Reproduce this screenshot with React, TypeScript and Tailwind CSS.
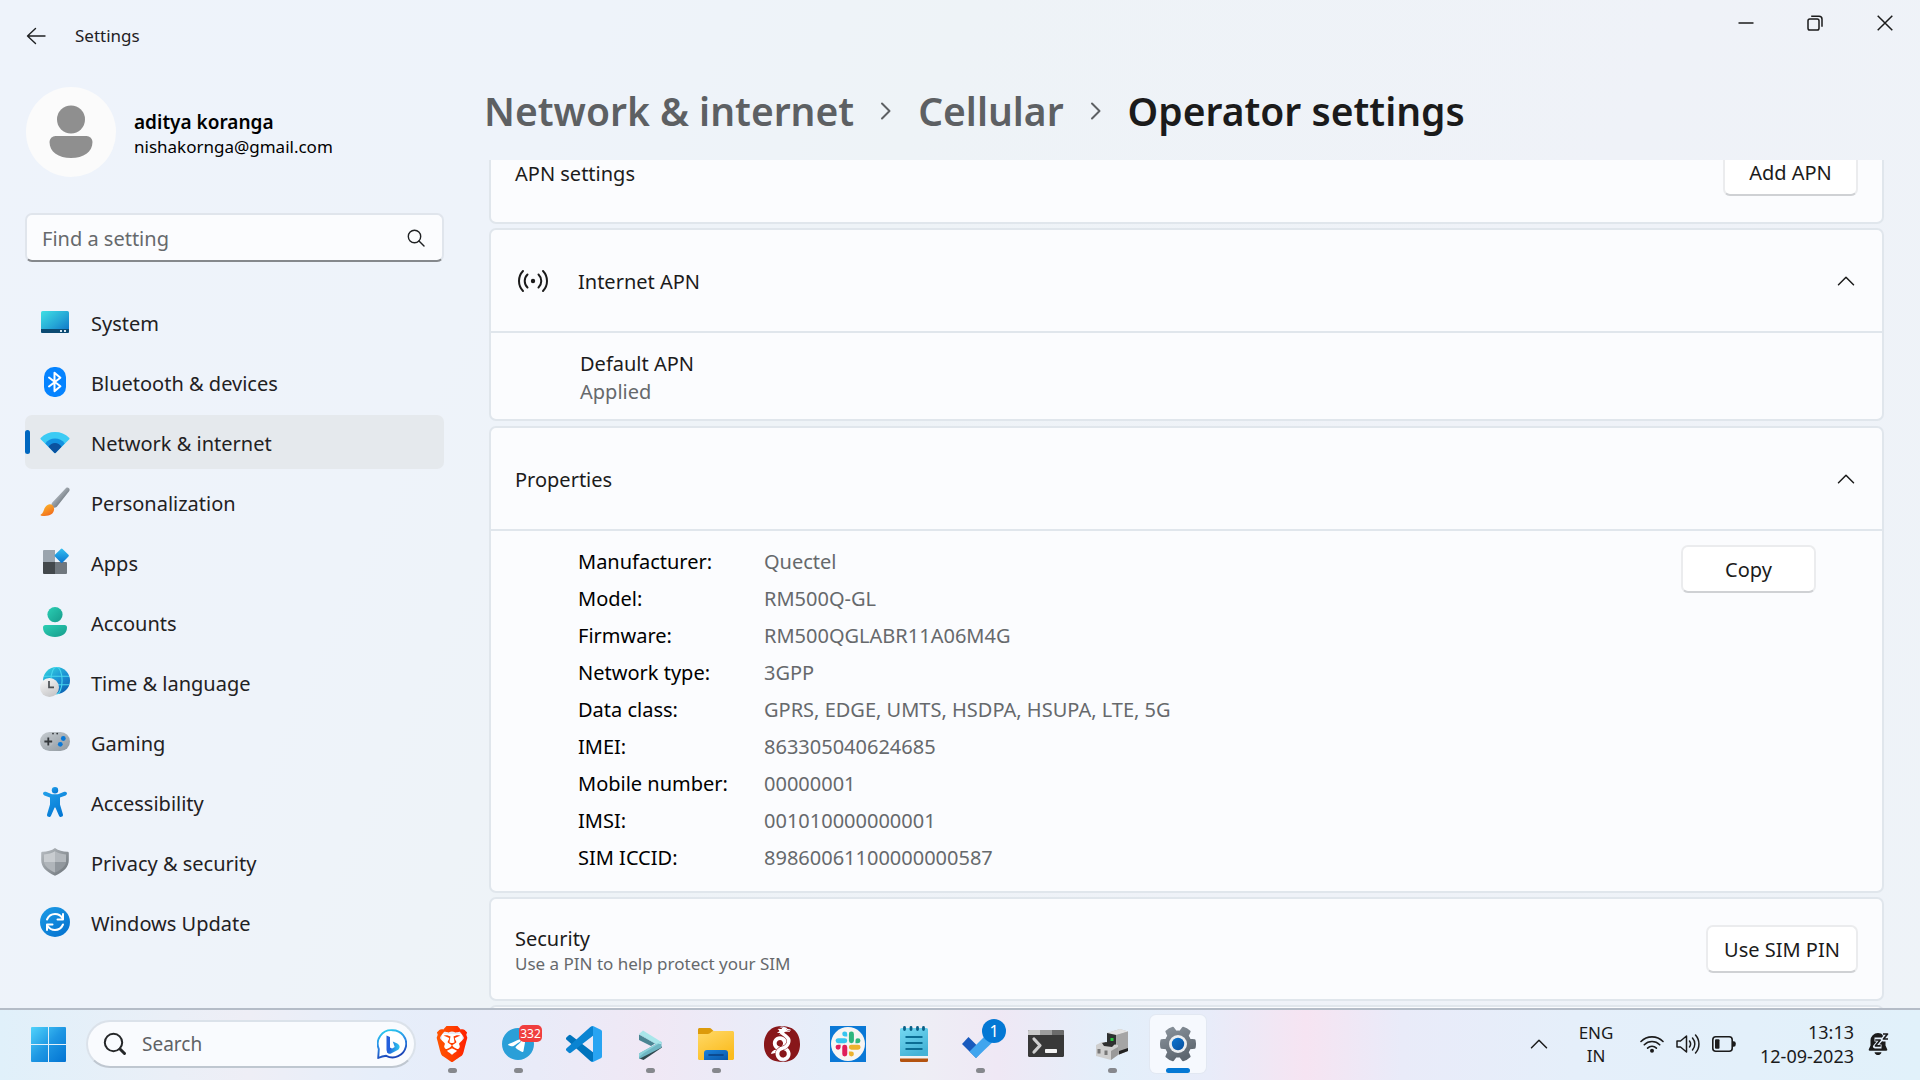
import React from "react";
import { SiBrave, SiTelegram, SiWireguard } from "react-icons/si";

type IconProps = { className?: string };

/* ---------- Sidebar icons (30 x 30) ---------- */

const SystemIcon = () => (
  <svg viewBox="0 0 30 30" className="size-[30px]">
    <defs>
      <linearGradient id="sys" x1="0" y1="0" x2="1" y2="1">
        <stop offset="0" stopColor="#3fe0e4" />
        <stop offset="0.55" stopColor="#25a6d6" />
        <stop offset="1" stopColor="#0c6fc6" />
      </linearGradient>
    </defs>
    <rect x="1" y="4" width="28" height="22" rx="1.6" fill="url(#sys)" />
    <path d="M1 22h28v2.4a1.6 1.6 0 0 1-1.6 1.6H2.600A1.600 1.600 0 0 1 1 24.400Z" fill="#0b4a72" />
    <rect x="20" y="23" width="2" height="2" fill="#d5e6f2" />
    <rect x="24" y="23" width="2" height="2" fill="#d5e6f2" />
  </svg>
);

const BluetoothIcon = () => (
  <svg viewBox="0 0 30 30" className="size-[30px]">
    <rect x="4" y="0" width="22" height="30" rx="10" fill="#0583ff" />
    <path d="M9 10.500 20.400 19.300 14.500 24.200V5.800L20.400 10.700 9 19.500" fill="none" stroke="#fff" strokeWidth="2" strokeLinejoin="round" strokeLinecap="round" />
  </svg>
);

const NetworkIcon = () => (
  <svg viewBox="0 0 30 30" className="size-[30px]">
    <path d="M0.700 12.300C0.300 11.800 0.400 11.200 0.900 10.800 4.500 7 9.500 5 15 5s10.500 2 14.100 5.800c.5.4.6 1 .2 1.500L15.700 25.800a1 1 0 0 1-1.400 0Z" fill="#3ccbf4" />
    <path d="M5.300 16.500C7.700 13 11 11.400 15 11.400s7.300 1.600 9.700 5.100L15.700 25.800a1 1 0 0 1-1.400 0Z" fill="#1391e0" />
    <path d="M8.500 19.800c1.500-2.500 3.800-3.900 6.500-3.900s5 1.400 6.500 3.900l-5.800 6a1 1 0 0 1-1.400 0Z" fill="#0b529f" />
  </svg>
);

const BrushIcon = () => (
  <svg viewBox="0 0 30 30" className="size-[30px]">
    <defs>
      <linearGradient id="brh" x1="0" y1="0" x2="1" y2="1">
        <stop offset="0.300" stopColor="#b3bac1" />
        <stop offset="0.700" stopColor="#6e767e" />
      </linearGradient>
      <linearGradient id="brt" x1="0.200" y1="0" x2="0.800" y2="1">
        <stop offset="0" stopColor="#fdb92c" />
        <stop offset="1" stopColor="#f0651b" />
      </linearGradient>
    </defs>
    <path d="M26 1c2-1.500 4.500.6 3.300 3L17 19.500c-1 1.600-3.500 1.400-4.700.2-1.200-1.100-1-3 0-4.200Z" fill="url(#brh)" />
    <path d="M7.500 18c3-2 7 .5 6.600 4.500C13.500 27.500 9 29.600 1.300 28.700.4 28.500.4 27.700 1.200 27.300 4 26 3.300 20.500 7.500 18Z" fill="url(#brt)" />
  </svg>
);

const AppsIcon = () => (
  <svg viewBox="0 0 30 30" className="size-[30px]">
    <defs>
      <linearGradient id="apd" x1="0" y1="0" x2="1" y2="1">
        <stop offset="0" stopColor="#35c1f1" />
        <stop offset="1" stopColor="#0a74cf" />
      </linearGradient>
    </defs>
    <path d="M4 3h11v12H3V4a1 1 0 0 1 1-1Z" fill="#9aa4ae" />
    <path d="M3 15h12v12H4a1 1 0 0 1-1-1Z" fill="#43484c" />
    <path d="M15 15h11a1 1 0 0 1 1 1v10a1 1 0 0 1-1 1H15Z" fill="#70777e" />
    <rect x="16.300" y="3.300" width="10.800" height="10.800" rx="1.200" transform="rotate(45 21.700 8.700)" fill="url(#apd)" />
  </svg>
);

const AccountsIcon = () => (
  <svg viewBox="0 0 30 30" className="size-[30px]">
    <defs>
      <linearGradient id="acc" x1="0" y1="0" x2="1" y2="1">
        <stop offset="0" stopColor="#2bcfb4" />
        <stop offset="1" stopColor="#169b8b" />
      </linearGradient>
    </defs>
    <circle cx="15" cy="7.600" r="7.600" fill="url(#acc)" />
    <path d="M5.500 18h19A2.500 2.500 0 0 1 27 20.500C27 26.500 22 30 15 30S3 26.500 3 20.500A2.500 2.500 0 0 1 5.500 18Z" fill="url(#acc)" />
  </svg>
);

const TimeIcon = () => (
  <svg viewBox="0 0 30 30" className="size-[30px]">
    <defs>
      <linearGradient id="glb" x1="0.200" y1="0" x2="0.900" y2="1">
        <stop offset="0" stopColor="#32d0de" />
        <stop offset="0.500" stopColor="#1b8fd3" />
        <stop offset="1" stopColor="#0a5cae" />
      </linearGradient>
      <linearGradient id="clk" x1="0" y1="0" x2="0.500" y2="1">
        <stop offset="0" stopColor="#fbfbfb" />
        <stop offset="1" stopColor="#c9c9cb" />
      </linearGradient>
    </defs>
    <circle cx="16.500" cy="13.500" r="13.500" fill="url(#glb)" />
    <g fill="none" stroke="#49d6ee" strokeWidth="1.100">
      <ellipse cx="16.500" cy="13.500" rx="5.600" ry="13.500" />
      <path d="M4 9.200h25M4 17.800h25" />
    </g>
    <circle cx="9.500" cy="20.500" r="9.500" fill="url(#clk)" />
    <path d="M9 14v6.400h5" fill="none" stroke="#4b4f53" strokeWidth="1.700" />
  </svg>
);

const GamingIcon = () => (
  <svg viewBox="0 0 30 30" className="size-[30px]">
    <defs>
      <linearGradient id="gam" x1="0" y1="0" x2="1" y2="1">
        <stop offset="0" stopColor="#c6ccd1" />
        <stop offset="1" stopColor="#90989f" />
      </linearGradient>
    </defs>
    <rect x="0" y="5" width="30" height="19" rx="9.500" fill="url(#gam)" />
    <circle cx="8.300" cy="14.500" r="5" fill="#b4bac0" />
    <path d="M8.300 10.600v7.800M4.400 14.500h7.800" stroke="#34383c" strokeWidth="1.800" />
    <circle cx="23.300" cy="11.500" r="2.400" fill="#0a78d6" />
    <circle cx="20.300" cy="17.300" r="2.400" fill="#0a78d6" />
    <circle cx="13" cy="6.600" r="0.900" fill="#34383c" />
    <circle cx="17.200" cy="6.600" r="0.900" fill="#34383c" />
  </svg>
);

const AccessibilityIcon = () => (
  <svg viewBox="0 0 30 30" className="size-[30px]">
    <defs>
      <linearGradient id="a11" x1="0" y1="0" x2="0.600" y2="1">
        <stop offset="0" stopColor="#22a0ea" />
        <stop offset="1" stopColor="#0478d4" />
      </linearGradient>
    </defs>
    <circle cx="15" cy="3.200" r="3.200" fill="url(#a11)" />
    <path d="M3.200 5.800c.5-1.100 1.500-1.400 2.600-1L12 7.300h6l6.200-2.500c1.100-.4 2.100-.1 2.600 1s-.1 2.100-1.200 2.600L20 10.600v7l2.900 9.700c.3 1.200-.3 2.100-1.300 2.500-1.100.4-2.100 0-2.600-1.100L15.500 20.800c-.2-.4-.8-.4-1 0L11 28.700c-.5 1.100-1.500 1.500-2.600 1.100-1-.4-1.600-1.300-1.300-2.500L10 17.600v-7L4.400 8.400C3.300 7.900 2.700 6.900 3.200 5.800Z" fill="url(#a11)" />
  </svg>
);

const ShieldIcon = () => (
  <svg viewBox="0 0 30 30" className="size-[30px]">
    <defs>
      <linearGradient id="shd" x1="0" y1="0" x2="1" y2="1">
        <stop offset="0" stopColor="#b9bec3" />
        <stop offset="1" stopColor="#6b7278" />
      </linearGradient>
    </defs>
    <path d="M15 1c3.500 2.500 8 3.700 12.300 3.700.9 0 1.500.5 1.500 1.300v7c0 6.600-4.800 12-13.800 15.700C6 25 1.200 19.600 1.200 13V6c0-.8.6-1.300 1.500-1.300C7 4.700 11.500 3.500 15 1Z" fill="url(#shd)" />
    <path d="M15 4.300V15H4V7.400C8 7.200 12 6.200 15 4.300Z" fill="#c8ccd0" />
    <path d="M15 4.300V15h11V7.400C22 7.200 18 6.200 15 4.300Z" fill="#b3b8bd" />
    <path d="M15 15v10.600C8.500 22.600 4.500 19 4 15Z" fill="#b0b5ba" />
    <path d="M15 15v10.600C21.500 22.600 25.500 19 26 15Z" fill="#91979d" />
  </svg>
);

const UpdateIcon = () => (
  <svg viewBox="0 0 30 30" className="size-[30px]">
    <defs>
      <linearGradient id="upd" x1="0" y1="0" x2="0.800" y2="1">
        <stop offset="0" stopColor="#1d9ce6" />
        <stop offset="1" stopColor="#0573d0" />
      </linearGradient>
    </defs>
    <circle cx="15" cy="15" r="15" fill="url(#upd)" />
    <g fill="none" stroke="#fff" strokeWidth="2" strokeLinejoin="round" strokeLinecap="round">
      <path d="M7 12.500C8.500 9 11.500 7 15 7c3 0 5.800 1.500 7.300 4" />
      <path d="M23 7v5.500h-5.500" />
      <path d="M23 17.500C21.500 21 18.500 23 15 23c-3 0-5.800-1.500-7.300-4" />
      <path d="M7 23v-5.500h5.500" />
    </g>
  </svg>
);

const navItems: { label: string; icon: () => React.ReactElement; active?: boolean }[] = [
  { label: "System", icon: SystemIcon },
  { label: "Bluetooth & devices", icon: BluetoothIcon },
  { label: "Network & internet", icon: NetworkIcon, active: true },
  { label: "Personalization", icon: BrushIcon },
  { label: "Apps", icon: AppsIcon },
  { label: "Accounts", icon: AccountsIcon },
  { label: "Time & language", icon: TimeIcon },
  { label: "Gaming", icon: GamingIcon },
  { label: "Accessibility", icon: AccessibilityIcon },
  { label: "Privacy & security", icon: ShieldIcon },
  { label: "Windows Update", icon: UpdateIcon },
];

/* ---------- Shared pieces ---------- */

const ChevronUp = ({ className = "" }: IconProps) => (
  <svg viewBox="0 0 18 10" className={className} fill="none" stroke="#1b1b1b" strokeWidth="1.500" strokeLinecap="round" strokeLinejoin="round">
    <path d="M1.500 8.700 9 1.200l7.500 7.500" />
  </svg>
);

const ChevronSep = () => (
  <svg viewBox="0 0 12 18" className="h-[18px] w-3 shrink-0" fill="none" stroke="#5d6063" strokeWidth="2" strokeLinecap="round" strokeLinejoin="round">
    <path d="M2 1.500 9.500 9 2 16.500" />
  </svg>
);

function Card({ children, className = "" }: { children: React.ReactNode; className?: string }) {
  return <section className={`shrink-0 rounded-[7px] border-2 border-[#e0e6ec] bg-[#fbfcfe] ${className}`}>{children}</section>;
}

function PushButton({ children, className = "" }: { children: React.ReactNode; className?: string }) {
  return (
    <button className={`h-12 rounded-[7px] border-2 border-[#ebecee] border-b-[#cfd1d4] bg-white pt-0.5 text-[20px] leading-6 text-[#1b1b1b] ${className}`}>
      {children}
    </button>
  );
}

function Sidebar() {
  return (
    <aside className="flex w-[444px] shrink-0 flex-col pl-[25px]">
      <button className="mt-[15px] flex items-center gap-[18px] pl-px text-left">
        <svg viewBox="0 0 90 90" className="size-[90px]">
          <circle cx="45" cy="45" r="45" fill="#fbfbfb" />
          <circle cx="45" cy="32.500" r="14" fill="#8f8f8f" />
          <path d="M29.500 49h31a6 6 0 0 1 6 6c0 10-9 16-21.500 16s-21.500-6-21.500-16a6 6 0 0 1 6-6Z" fill="#8f8f8f" />
        </svg>
        <span className="flex flex-col pt-1 text-black">
          <span className="text-[19px] leading-[26px] font-semibold">aditya koranga</span>
          <span className="text-[17px] leading-6">nishakornga@gmail.com</span>
        </span>
      </button>

      <label className="mt-9 flex h-[49px] items-center rounded-[7px] border-2 border-[#e0e5ec] border-b-[#85888c] bg-[#fbfcfe] pr-[17px] pl-[15px]">
        <input type="text" aria-label="Find a setting" placeholder="Find a setting" className="min-w-0 flex-1 bg-transparent pt-0.5 text-[20px] leading-7 outline-none placeholder:text-[#66696c]" />
        <svg viewBox="0 0 18 18" className="size-[18px]" fill="none" stroke="#1f2123" strokeWidth="1.400" strokeLinecap="round">
          <circle cx="7.500" cy="7.500" r="6.200" />
          <path d="m12 12 5 5" />
        </svg>
      </label>

      <nav className="mt-[33px] flex flex-col gap-1.5">
        {navItems.map(({ label, icon: Icon, active }) => (
          <a
            key={label}
            href="#"
            className={`relative flex h-[54px] items-center gap-[21px] rounded-[7px] pl-[15px] text-[20px] leading-7 text-[#1f2123] ${active ? "bg-[#e5e9ed]" : ""}`}
          >
            {active && <span className="absolute top-[15px] left-0 h-6 w-[5px] rounded-full bg-[#0067c0]" />}
            <Icon />
            <span className="pt-[3px]">{label}</span>
          </a>
        ))}
      </nav>
    </aside>
  );
}

const properties: [string, string][] = [
  ["Manufacturer:", "Quectel"],
  ["Model:", "RM500Q-GL"],
  ["Firmware:", "RM500QGLABR11A06M4G"],
  ["Network type:", "3GPP"],
  ["Data class:", "GPRS, EDGE, UMTS, HSDPA, HSUPA, LTE, 5G"],
  ["IMEI:", "863305040624685"],
  ["Mobile number:", "00000001"],
  ["IMSI:", "001010000000001"],
  ["SIM ICCID:", "89860061100000000587"],
];

function Content() {
  return (
    <main className="flex min-w-0 flex-1 flex-col pr-9 pl-10">
      <h1 className="flex h-[88px] shrink-0 items-center gap-[26px] pb-2.5 text-[39px] leading-[52px] font-semibold text-[#5d6063]">
        <a href="#">Network &amp; internet</a>
        <ChevronSep />
        <a href="#">Cellular</a>
        <ChevronSep />
        <span className="text-[#1b1b1b]">Operator settings</span>
      </h1>

      <div className="min-h-0 flex-1 overflow-hidden pl-[5px]">
        <div className="-mt-10 flex flex-col gap-1 text-[20px] leading-7 text-[#1b1b1b]">
          <Card className="flex h-[104px] items-center justify-between pr-6 pl-6">
            <h2 className="pt-[3px] leading-6">APN settings</h2>
            <PushButton className="w-[135px]">Add APN</PushButton>
          </Card>

          <Card>
            <button className="flex h-[103px] w-full items-center border-b-2 border-[#e0e6ec] pr-[27px] pl-[25px]">
              <svg viewBox="0 0 34 26" className="h-[26px] w-[34px]" fill="none" stroke="#1b1b1b" strokeWidth="2" strokeLinecap="round">
                <path d="M7 3a14.500 14.500 0 0 0 0 20M27 3a14.500 14.500 0 0 1 0 20M11.500 6.500a9 9 0 0 0 0 13M22.500 6.500a9 9 0 0 1 0 13" />
                <circle cx="17" cy="13" r="2.200" fill="#1b1b1b" stroke="none" />
              </svg>
              <span className="ml-[28px] flex-1 pt-0.5 text-left">Internet APN</span>
              <ChevronUp className="h-2.5 w-[18px]" />
            </button>
            <div className="pt-[17px] pb-[13px] pl-[89px]">
              <p>Default APN</p>
              <p className="text-[#66696c]">Applied</p>
            </div>
          </Card>

          <Card className="mt-px">
            <button className="flex h-[103px] w-full items-center justify-between border-b-2 border-[#e0e6ec] pr-[27px] pl-6">
              <span className="pt-0.5">Properties</span>
              <ChevronUp className="h-2.5 w-[18px]" />
            </button>
            <div className="flex items-start justify-between pt-3 pr-[66px] pb-[15px] pl-[87px]">
              <table className="text-left">
                <tbody>
                  {properties.map(([name, value]) => (
                    <tr key={name} className="h-[37px]">
                      <th scope="row" className="w-[186px] font-normal text-black">{name}</th>
                      <td className="text-[#66696c]">{value}</td>
                    </tr>
                  ))}
                </tbody>
              </table>
              <PushButton className="mt-0.5 w-[135px]">Copy</PushButton>
            </div>
          </Card>

          <Card className="flex h-[104px] items-center justify-between pr-6 pl-6">
            <div className="pt-[3px]">
              <h2 className="leading-[26px]">Security</h2>
              <p className="text-[17px] leading-6 text-[#66696c]">Use a PIN to help protect your SIM</p>
            </div>
            <PushButton className="w-[152px]">Use SIM PIN</PushButton>
          </Card>

          <Card className="h-[104px]">{null}</Card>
        </div>
      </div>
    </main>
  );
}

/* ---------- Taskbar icons (36 x 36) ---------- */

const StartIcon = () => (
  <svg viewBox="0 0 35 35" className="size-[35px]">
    <defs>
      <linearGradient id="win" gradientUnits="userSpaceOnUse" x1="0" y1="0" x2="35" y2="35">
        <stop offset="0" stopColor="#50d3fb" />
        <stop offset="0.500" stopColor="#1e97e3" />
        <stop offset="1" stopColor="#0273d2" />
      </linearGradient>
    </defs>
    <path d="M1 0h16v17H0V1a1 1 0 0 1 1-1ZM18 0h16a1 1 0 0 1 1 1v16H18ZM0 18h17v17H1a1 1 0 0 1-1-1ZM18 18h17v16a1 1 0 0 1-1 1H18Z" fill="url(#win)" />
  </svg>
);

const BingIcon = () => (
  <svg viewBox="0 0 30 30" className="size-[30px]">
    <defs>
      <linearGradient id="bng" x1="0" y1="0" x2="0.300" y2="1">
        <stop offset="0" stopColor="#27d3ee" />
        <stop offset="0.550" stopColor="#2b8ae6" />
        <stop offset="1" stopColor="#1b45b8" />
      </linearGradient>
      <linearGradient id="bnb" x1="0" y1="0" x2="1" y2="0">
        <stop offset="0" stopColor="#1d57d8" />
        <stop offset="1" stopColor="#2fc8f0" />
      </linearGradient>
    </defs>
    <path d="M15.500 1.200a13.600 13.600 0 1 1-6.300 25.600c-2.500.3-5 .9-8 2.200L1.800 20A13.600 13.600 0 0 1 15.500 1.200Z" fill="#fff" stroke="url(#bng)" strokeWidth="1.900" strokeLinejoin="round" />
    <path d="M9.500 6.500 13 8v10.500l3.500 2-3.300 3.300c-2.200.5-3.700-1-3.700-3.100Z" fill="#2560dc" />
    <path d="m15.800 12.500 4.500 2.100c3 1.500 2.900 4.700.9 6.200L14 24.500c-1.500.6-3.500 0-4.200-1.800L17.700 18Z" fill="url(#bnb)" />
  </svg>
);

const BraveIcon = () => (
  <span className="relative flex size-9 items-center justify-center">
    <svg width="0" height="0" className="absolute">
      <defs>
        <linearGradient id="brv" x1="0" y1="0" x2="1" y2="0">
          <stop offset="0" stopColor="#ff5601" />
          <stop offset="0.500" stopColor="#ff4000" />
          <stop offset="1" stopColor="#ff1f01" />
        </linearGradient>
      </defs>
    </svg>
    <span className="absolute h-5 w-5 rounded-b-full bg-white" />
    <SiBrave className="relative size-9" style={{ fill: "url(#brv)" }} />
  </span>
);

const TelegramIcon = () => (
  <span className="relative flex size-9 items-center justify-center">
    <span className="absolute size-6 rounded-full bg-white" />
    <SiTelegram className="relative size-8 text-[#2a9fd8]" />
    <span className="absolute -top-px left-[19px] flex h-[17px] w-[23px] items-center justify-center rounded-[5px] bg-[#f03e3e] text-[12px] leading-4 text-white">332</span>
  </span>
);

const VsCodeIcon = () => (
  <svg viewBox="0 0 36 36" className="size-9">
    <path d="M27 26.300 4.900 9.200a1.700 1.700 0 0 0-2.100.1L.6 11.300a1.600 1.600 0 0 0 0 2.400l23.700 21.400c.8.7 1.700.9 2.700.9Z" fill="#0074bd" />
    <path d="M27 9.700 4.900 26.800a1.700 1.700 0 0 1-2.100-.1L.6 24.700a1.600 1.600 0 0 1 0-2.400L24.300.9C25.100.2 26 0 27 0Z" fill="#0a84d2" />
    <path d="M27 0 34.800 3.700a2.200 2.200 0 0 1 1.200 2v24.600c0 .9-.5 1.600-1.200 2L27 36c-.6.100-1.300-.1-1.700-.6.8.5 1.700.1 1.700-.9V1.500c0-1-.9-1.500-1.700-.9C25.700.1 26.400-.1 27 0Z" fill="#28a4f2" />
  </svg>
);

const PromptIcon = () => (
  <svg viewBox="0 0 36 36" className="size-9">
    <path d="M7.500 29.500 28.500 19l1.500 2.500L11.500 34l-4-1.500Z" fill="#31484f" />
    <path d="M7 8 24 18 7 27.500V33L29.500 21.500V16Z" fill="#6fb6c3" />
    <path d="M7 14V8.500l16 9-4 2.500Z" fill="#4a8593" />
    <path d="M11 4.500 29.500 16v2L24 18 7 8Z" fill="#a9e6ea" />
    <path d="M7 27.500 24 18l5.500-2L12 27l-5 4Z" fill="#8ad0d8" />
  </svg>
);

const FolderIcon = () => (
  <svg viewBox="0 0 36 36" className="size-9">
    <defs>
      <linearGradient id="fld" x1="0" y1="0" x2="0.600" y2="1">
        <stop offset="0" stopColor="#ffd968" />
        <stop offset="1" stopColor="#fbbc1f" />
      </linearGradient>
      <linearGradient id="flb" x1="0" y1="0" x2="1" y2="1">
        <stop offset="0" stopColor="#1a82dc" />
        <stop offset="1" stopColor="#0a57a8" />
      </linearGradient>
    </defs>
    <path d="M1.500 2h10c.8 0 1.500.3 2 .9L15.500 5v4H0V3.500C0 2.700.7 2 1.500 2Z" fill="#dc9a0b" />
    <path d="M0 8h9.500c1 0 2-.4 2.700-1.100L14 5.500c.4-.3.800-.5 1.500-.5h19c.8 0 1.500.7 1.500 1.500v26c0 .8-.7 1.500-1.500 1.500h-33C.7 34 0 33.300 0 32.500Z" fill="url(#fld)" />
    <path d="M9 24h18a3 3 0 0 1 3 3v7H6v-7a3 3 0 0 1 3-3Z" fill="url(#flb)" />
    <path d="M11 29h14" stroke="#0a3f80" strokeWidth="1.600" strokeLinecap="round" />
  </svg>
);

const WireguardIcon = () => (
  <span className="relative flex size-9 items-center justify-center">
    <span className="absolute size-8 rounded-full bg-white" />
    <SiWireguard className="relative size-9 text-[#88171a]" />
  </span>
);

const SlackIcon = () => (
  <svg viewBox="0 0 36 36" className="size-9">
    <rect width="36" height="36" fill="#0a78d6" />
    <circle cx="18" cy="18" r="17" fill="#f7f5f3" />
    <g transform="translate(5.500 5.500) scale(1.040)">
      <path d="M8.900 0a2.400 2.400 0 0 0 0 4.800h2.400V2.400A2.400 2.400 0 0 0 8.900 0ZM8.900 6.400H2.500a2.400 2.400 0 0 0 0 4.800h6.400a2.400 2.400 0 0 0 0-4.800Z" fill="#36c5f0" />
      <path d="M24 8.800a2.400 2.400 0 0 0-4.800 0v2.400h2.400A2.400 2.400 0 0 0 24 8.800ZM17.700 8.800V2.400a2.400 2.400 0 0 0-4.800 0v6.400a2.400 2.400 0 0 0 4.800 0Z" fill="#2eb67d" />
      <path d="M15.300 24a2.400 2.400 0 0 0 0-4.800h-2.400v2.400a2.400 2.400 0 0 0 2.400 2.400ZM15.300 17.600h6.400a2.400 2.400 0 0 0 0-4.800h-6.400a2.400 2.400 0 0 0 0 4.800Z" fill="#ecb22e" />
      <path d="M.1 15.200a2.400 2.400 0 0 0 4.800 0v-2.400H2.500a2.400 2.400 0 0 0-2.400 2.400ZM6.500 15.200v6.400a2.400 2.400 0 0 0 4.800 0v-6.400a2.400 2.400 0 0 0-4.800 0Z" fill="#e01e5a" />
    </g>
  </svg>
);

const NotepadIcon = () => (
  <svg viewBox="0 0 36 36" className="size-9">
    <defs>
      <linearGradient id="ntp" x1="0" y1="0" x2="0.500" y2="1">
        <stop offset="0" stopColor="#74d9f3" />
        <stop offset="1" stopColor="#45b3d6" />
      </linearGradient>
    </defs>
    <rect x="4" y="26" width="28" height="10" rx="1.500" fill="#b4530f" />
    <rect x="4" y="24" width="28" height="8.500" fill="#f2f2f2" />
    <path d="M5.500 2h25A1.500 1.500 0 0 1 32 3.500V30H4V3.500A1.500 1.500 0 0 1 5.500 2Z" fill="url(#ntp)" />
    <path d="M8.500 1.500v2M15 1.500v2M21.500 1.500v2M27.500 1.500v2" stroke="#0a5f86" strokeWidth="2.800" strokeLinecap="round" />
    <path d="M9.500 11h17M9.500 17h17M9.500 23h17" stroke="#0b6d94" strokeWidth="2" />
  </svg>
);

const TodoIcon = () => (
  <span className="relative flex size-9 items-center justify-center">
    <svg viewBox="0 0 36 36" className="size-9">
      <path d="M0 18 6.500 11l14 14L14 32Z" fill="#195abd" />
      <path d="M7.500 25.500 28 5l7 7L14 32Z" fill="#41a5ee" />
    </svg>
    <span className="absolute -top-[7px] left-5 flex size-6 items-center justify-center rounded-full bg-[#0478d4] text-[16px] leading-5 text-white">1</span>
  </span>
);

const TerminalIcon = () => (
  <svg viewBox="0 0 36 36" className="size-9">
    <rect x="0" y="4" width="36" height="27" rx="1.500" fill="#383838" />
    <path d="M1.500 4H12v5H0V5.500A1.500 1.500 0 0 1 1.500 4Z" fill="#c9c9c9" />
    <path d="M12 4h12v5H12Z" fill="#9c9c9c" />
    <path d="M24 4h10.500A1.500 1.500 0 0 1 36 5.500V9H24Z" fill="#6a6a6a" />
    <path d="m6 13 6 6.500L6 26" fill="none" stroke="#cfcfcf" strokeWidth="3.200" strokeLinejoin="round" strokeLinecap="round" />
    <rect x="17" y="23" width="12" height="4" rx="0.800" fill="#f4f4f4" />
  </svg>
);

const DriveIcon = () => (
  <svg viewBox="0 0 36 36" className="size-9">
    <path d="m13 7 13-4 8 2.500V25L24 29l-11-4Z" fill="#bdbdbd" />
    <path d="m13 7 13-4 8 2.500L23 9Z" fill="#e2e2e2" />
    <path d="M13 7l9 2v17l-9-3Z" fill="#2e3130" />
    <path d="M22 9l12-3.500V25l-11 4Z" fill="#a5a5a5" />
    <path d="m25 25 9-3v3l-9 3.500Z" fill="#222" />
    <rect x="16.500" y="12" width="3" height="3" fill="#27c93f" />
    <path d="m2 19 6-3 16 3v9l-7 6-15-4Z" fill="#cfcfcf" />
    <path d="m17 25 7-4v8l-7 5Z" fill="#9a9a9a" />
    <path d="m8 17 4-1 9 2-3 3-8-1Z" fill="#303030" />
    <path d="M5 23v4.500M12 24.500V29" stroke="#777" strokeWidth="3" />
  </svg>
);

const gearPath = Array.from({ length: 6 }, (_, i) => {
  const at = (r: number, deg: number) => {
    const a = ((i * 60 + deg) * Math.PI) / 180;
    return `${(18 + r * Math.cos(a)).toFixed(2)} ${(18 + r * Math.sin(a)).toFixed(2)}`;
  };
  return `${i ? "L" : "M"}${at(12.5, -20)}L${at(17, -13)}A17 17 0 0 1 ${at(17, 13)}L${at(12.5, 20)}A12.500 12.500 0 0 1 ${at(12.5, 40)}`;
}).join("");

const GearIcon = () => (
  <svg viewBox="0 0 36 36" className="size-9">
    <defs>
      <linearGradient id="ger" x1="0" y1="0" x2="0.500" y2="1">
        <stop offset="0" stopColor="#8b949d" />
        <stop offset="1" stopColor="#5d666f" />
      </linearGradient>
      <linearGradient id="gec" x1="0" y1="0" x2="1" y2="1">
        <stop offset="0" stopColor="#0b76d3" />
        <stop offset="1" stopColor="#0a4f9c" />
      </linearGradient>
    </defs>
    <path d={`${gearPath}Z`} fill="url(#ger)" stroke="url(#ger)" strokeWidth="2" strokeLinejoin="round" />
    <circle cx="18" cy="18" r="9" fill="#eceef0" />
    <circle cx="18" cy="18" r="6.200" fill="url(#gec)" />
  </svg>
);

const apps: { name: string; icon: () => React.ReactElement; running?: boolean; active?: boolean }[] = [
  { name: "Brave", icon: BraveIcon, running: true },
  { name: "Telegram", icon: TelegramIcon, running: true },
  { name: "Visual Studio Code", icon: VsCodeIcon },
  { name: "Terminal client", icon: PromptIcon, running: true },
  { name: "File Explorer", icon: FolderIcon, running: true },
  { name: "WireGuard", icon: WireguardIcon },
  { name: "Slack", icon: SlackIcon },
  { name: "Notepad", icon: NotepadIcon },
  { name: "To Do", icon: TodoIcon, running: true },
  { name: "Terminal", icon: TerminalIcon },
  { name: "Disk utility", icon: DriveIcon, running: true },
  { name: "Settings", icon: GearIcon, active: true },
];

function Taskbar() {
  return (
    <footer className="flex h-[72px] shrink-0 items-center border-t-2 border-[#b4bcc7] bg-[linear-gradient(90deg,#e0f0fa_0%,#eaeff7_9%,#eeeef6_13%,#e6eefa_20%,#e9ebf8_28%,#f0e8f5_34%,#e6eefa_43%,#eeeef5_48%,#efe8f5_52%,#e3effa_58%,#e8ecf9_63%,#f6e4f2_68%,#e9ebf9_73%,#e5effa_82%,#e1f1fa_100%)] pr-[31px] pb-0.5 pl-[31px]">
      <button aria-label="Start" className="shrink-0"><StartIcon /></button>
      <label className="ml-5 flex h-12 w-[330px] shrink-0 items-center rounded-full border-2 border-[#dbe2ea] border-b-[#bfc7d0] bg-[#f9fbfe] pr-[7px] pl-[15px]">
        <svg viewBox="0 0 24 24" className="size-6" fill="none" stroke="#252729" strokeLinecap="round">
          <circle cx="10.500" cy="10.500" r="8.700" strokeWidth="2" />
          <path d="m17 17 4.500 4.500" strokeWidth="3" />
        </svg>
        <input type="text" aria-label="Search" placeholder="Search" className="ml-[15px] min-w-0 flex-1 bg-transparent text-[19px] leading-6 outline-none placeholder:text-[#5f6265]" />
        <BingIcon />
      </label>

      <div className="ml-2 flex gap-2.5">
        {apps.map(({ name, icon: Icon, running, active }) => (
          <button
            key={name}
            aria-label={name}
            className={`relative flex h-[58px] w-14 items-center justify-center rounded-[6px] ${active ? "bg-[#f6f9fe] shadow-[0_0_0_1px_#e2e8f2]" : ""}`}
          >
            <Icon />
            {running && <span className="absolute bottom-0 h-[5px] w-[9px] rounded-full bg-[#86888d]" />}
            {active && <span className="absolute bottom-0 h-[5px] w-6 rounded-full bg-[#0478d4]" />}
          </button>
        ))}
      </div>

      <div className="ml-auto flex items-center text-[17px] leading-[23px] text-[#1b1b1b]">
        <button aria-label="Show hidden icons"><ChevronUp className="h-2.5 w-[18px]" /></button>
        <button aria-label="Input language" className="ml-[28px] w-10 text-center">
          <span className="block">ENG</span>
          <span className="block">IN</span>
        </button>
        <button aria-label="Network, sound and battery" className="ml-6 flex items-center gap-3">
          <svg viewBox="0 0 24 18" className="h-[18px] w-6" fill="none" stroke="#1b1b1b" strokeWidth="1.600" strokeLinecap="round">
            <path d="M1 6.500a15.500 15.500 0 0 1 22 0M4.300 9.800a10.800 10.800 0 0 1 15.400 0M7.600 13.100a6.200 6.200 0 0 1 8.800 0" />
            <circle cx="12" cy="15.800" r="2" fill="#1b1b1b" stroke="none" />
          </svg>
          <svg viewBox="0 0 24 22" className="h-[22px] w-6" fill="none" stroke="#1b1b1b" strokeWidth="1.500" strokeLinecap="round" strokeLinejoin="round">
            <path d="M1 8v6h3.500l6 5V3l-6 5ZM13.500 8a5 5 0 0 1 0 6M16.500 5a9 9 0 0 1 0 12M19.500 2a13.500 13.500 0 0 1 0 18" />
          </svg>
          <svg viewBox="0 0 24 16" className="h-4 w-6" fill="none" stroke="#1b1b1b" strokeWidth="1.600">
            <rect x="0.800" y="0.800" width="19.400" height="14.400" rx="3" />
            <rect x="3" y="3.300" width="4.500" height="9.400" rx="1" fill="#1b1b1b" stroke="none" />
            <path d="M20.500 5.200h1.200a2 2 0 0 1 2 2v1.600a2 2 0 0 1-2 2h-1.200Z" fill="#1b1b1b" stroke="none" />
          </svg>
        </button>
        <button aria-label="Clock and calendar" className="ml-6 text-right text-[18px] leading-6">
          <span className="block">13:13</span>
          <span className="block">12-09-2023</span>
        </button>
        <button aria-label="Notifications" className="ml-[14px]">
          <svg viewBox="0 0 21 24" className="h-6 w-[21px]">
            <path d="M10 1a7.500 7.500 0 0 0-7.500 7.500v5L.8 17.300c-.3.700.1 1.400.9 1.400h16.600c.8 0 1.200-.7.900-1.400L17.500 13.500v-5A7.500 7.500 0 0 0 10 1ZM6.500 20.200c.4 1.700 1.800 2.900 3.500 2.900s3.100-1.200 3.500-2.900Z" fill="#1b1b1b" />
            <path d="M6.500 7.500h6.500L7 14.500h6.500M14.500 1.500h5l-4.500 6h5" fill="none" stroke="#e5effa" strokeWidth="4" strokeLinejoin="round" />
            <path d="M7.200 8h5L7.500 13.800h5.200M15 2h4.500l-4 5H20" fill="none" stroke="#1b1b1b" strokeWidth="1.700" strokeLinejoin="round" />
          </svg>
        </button>
      </div>
    </footer>
  );
}

export default function App() {
  return (
    <div className="flex h-screen flex-col overflow-hidden bg-[linear-gradient(115deg,#eef3fb_0%,#eef3fa_25%,#eef3f7_40%,#eff2f8_70%,#eef3f8_100%)] font-['Noto_Sans',sans-serif]">
      <header className="flex h-[72px] shrink-0 items-start justify-between">
        <div className="flex h-[72px] items-center pl-[26px]">
          <button aria-label="Back">
            <svg viewBox="0 0 20 18" className="h-[18px] w-5" fill="none" stroke="#1f2123" strokeWidth="1.400" strokeLinecap="round" strokeLinejoin="round">
              <path d="M9.500 1.500 1.500 9l8 7.500M1.500 9H19" />
            </svg>
          </button>
          <span className="ml-[29px] text-[17px] leading-6 text-[#1f2123]">Settings</span>
        </div>
        <div className="flex">
          <button aria-label="Minimize" className="flex h-[46px] w-[69px] items-center justify-center">
            <svg viewBox="0 0 16 16" className="size-4"><path d="M0.500 8h15" stroke="#1b1b1b" strokeWidth="1.500" /></svg>
          </button>
          <button aria-label="Restore" className="flex h-[46px] w-[69px] items-center justify-center">
            <svg viewBox="0 0 16 16" className="size-4" fill="none" stroke="#1b1b1b" strokeWidth="1.500">
              <rect x="1" y="4" width="11" height="11" rx="1.800" />
              <path d="M4.200 1.300H12A3 3 0 0 1 15 4.300v7.500" />
            </svg>
          </button>
          <button aria-label="Close" className="flex h-[46px] w-[71px] items-center justify-center">
            <svg viewBox="0 0 16 16" className="size-4"><path d="m.7.7 14.600 14.600M15.300.7.700 15.300" stroke="#1b1b1b" strokeWidth="1.500" /></svg>
          </button>
        </div>
      </header>
      <div className="flex min-h-0 flex-1">
        <Sidebar />
        <Content />
      </div>
      <Taskbar />
    </div>
  );
}
